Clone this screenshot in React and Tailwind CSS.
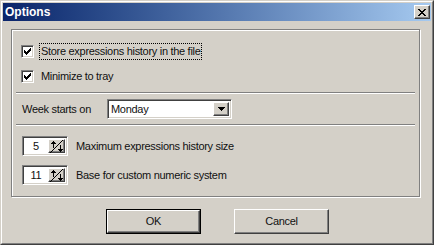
import React from 'react';

const raised = 'border border-t-white border-l-white border-r-[#404040] border-b-[#404040] shadow-[inset_-1px_-1px_0_#808080,inset_1px_1px_0_#d4d0c8]';
const sunken = 'border border-t-[#808080] border-l-[#808080] border-r-white border-b-white shadow-[inset_1px_1px_0_#404040,inset_-1px_-1px_0_#d4d0c8]';

function CheckBox({ label, focused }) {
  return (
    <div className="flex items-center h-[17px]">
      <div className={`w-[13px] h-[13px] bg-white ${sunken} flex items-center justify-center`}>
        <svg width="7" height="7" viewBox="0 0 7 7" shapeRendering="crispEdges">
          <path d="M0 2h1v3h-1zM1 3h1v3h-1zM2 4h1v3h-1zM3 3h1v3h-1zM4 2h1v3h-1zM5 1h1v3h-1zM6 0h1v3h-1z" fill="#000" />
        </svg>
      </div>
      <div className={`ml-[5px] px-[1px] h-[17px] flex items-center border ${focused ? 'border-dotted border-black' : 'border-transparent'}`}>
        {label}
      </div>
    </div>
  );
}

function SpinBox({ value, label }) {
  return (
    <div className="flex items-center h-[20px]">
      <div className={`w-[46px] h-[20px] bg-white ${sunken} flex p-[2px]`}>
        <div className="flex-1 flex items-center justify-center pr-[1px]">{value}</div>
        <div className={`w-[17px] h-full bg-[#d4d0c8] ${raised} flex items-center justify-center`}>
          <svg width="14" height="13" viewBox="0 0 14 13" shapeRendering="crispEdges">
            <path d="M13 0L0 13" stroke="#000" strokeWidth="1" fill="none" shapeRendering="auto" />
            <path d="M3 1h1v1h-1zM2 2h3v1h-3zM1 3h5v1h-5zM3 4h1v4h-1z" fill="#000" />
            <path d="M10 5h1v4h-1zM8 9h5v1h-5zM9 10h3v1h-3zM10 11h1v1h-1z" fill="#000" />
          </svg>
        </div>
      </div>
      <span className="ml-[8px]">{label}</span>
    </div>
  );
}

function Separator() {
  return <div className="mx-[4px] h-[2px] border-t border-t-[#808080] border-b border-b-white" />;
}

export default function App() {
  return (
    <div className="w-[434px] h-[245px] bg-[#d4d0c8] border border-t-[#d4d0c8] border-l-[#d4d0c8] border-r-[#404040] border-b-[#404040] text-[11px] tracking-[-0.3px] text-[#111] select-none" style={{ fontFamily: '"Liberation Sans", Arial, sans-serif' }}>
      <div className="h-full border border-t-white border-l-white border-r-[#808080] border-b-[#808080] p-[1px] flex flex-col">
        <div className="h-[18px] flex items-center justify-between bg-gradient-to-r from-[#0a246a] to-[#a6caf0] pl-[2px] pr-[1px]">
          <span className="text-white font-bold text-[12px] tracking-normal">Options</span>
          <div className={`w-[16px] h-[14px] bg-[#d4d0c8] ${raised} flex items-center justify-center`}>
            <svg width="8" height="7" viewBox="0 0 8 7" shapeRendering="crispEdges">
              <path d="M0 0h2v1h-2zM6 0h2v1h-2zM1 1h2v1h-2zM5 1h2v1h-2zM2 2h4v1h-4zM3 3h2v1h-2zM2 4h4v1h-4zM1 5h2v1h-2zM5 5h2v1h-2zM0 6h2v1h-2zM6 6h2v1h-2z" fill="#000" />
            </svg>
          </div>
        </div>

        <div className="ml-[8px] mr-[11px] mt-[8px] h-[168px] border border-[#808080] shadow-[inset_1px_1px_0_#fff,1px_1px_0_#fff] flex flex-col">
          <div className="pl-[9px] mt-[13px]">
            <CheckBox label="Store expressions history in the file" focused />
          </div>
          <div className="pl-[9px] mt-[8px]">
            <CheckBox label="Minimize to tray" />
          </div>
          <div className="mt-[7px]"><Separator /></div>
          <div className="mt-[5px] pl-[10px] flex items-center h-[20px]">
            <span className="w-[85px]">Week starts on</span>
            <div className={`w-[125px] h-[20px] bg-white ${sunken} flex p-[2px]`}>
              <div className="flex-1 flex items-center pl-[1px]">Monday</div>
              <div className={`w-[16px] h-full bg-[#d4d0c8] ${raised} flex items-center justify-center`}>
                <svg width="7" height="4" viewBox="0 0 7 4" shapeRendering="crispEdges">
                  <path d="M0 0h7v1h-7zM1 1h5v1h-5zM2 2h3v1h-3zM3 3h1v1h-1z" fill="#000" />
                </svg>
              </div>
            </div>
          </div>
          <div className="mt-[5px]"><Separator /></div>
          <div className="mt-[10px] pl-[10px]">
            <SpinBox value="5" label="Maximum expressions history size" />
          </div>
          <div className="mt-[9px] pl-[10px]">
            <SpinBox value="11" label="Base for custom numeric system" />
          </div>
        </div>

        <div className="flex justify-center gap-[33px] mt-[12px] pl-[1px]">
          <div className="w-[95px] h-[25px] border border-black">
            <div className={`w-full h-full bg-[#d4d0c8] ${raised} flex items-center justify-center`}>OK</div>
          </div>
          <div className={`w-[95px] h-[25px] bg-[#d4d0c8] ${raised} flex items-center justify-center`}>Cancel</div>
        </div>
      </div>
    </div>
  );
}
